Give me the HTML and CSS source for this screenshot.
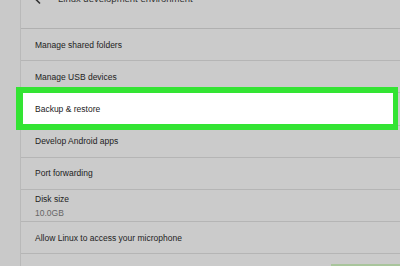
FILE: index.html
```html
<!DOCTYPE html>
<html>
<head>
<meta charset="utf-8">
<link rel="stylesheet" href="styles.css">
</head>
<body>
<div class="page">
  <div class="strip"></div>
  <div class="panel">
    <div class="header">
      <div class="header-inner">
        <svg class="back" width="12" height="12" viewBox="0 0 12 12"><path d="M11 6H2M6 1.5L1.5 6 6 10.5" fill="none" stroke="#333" stroke-width="1.6"/></svg>
        <span class="title">Linux development environment</span>
      </div>
    </div>
    <div class="row"><span class="label">Manage shared folders</span></div>
    <div class="row"><span class="label">Manage USB devices</span></div>
    <div class="row highlighted"><span class="label">Backup &amp; restore</span></div>
    <div class="row"><span class="label">Develop Android apps</span></div>
    <div class="row"><span class="label">Port forwarding</span></div>
    <div class="row two"><span class="label">Disk size</span><span class="sub">10.0GB</span></div>
    <div class="row"><span class="label">Allow Linux to access your microphone</span></div>
    <div class="row last"><span class="button"></span></div>
  </div>
</div>
</body>
</html>
```
FILE: styles.css
```css
html, body {
  margin: 0;
  padding: 0;
  background: #cbcbcb;
  overflow: hidden;
}
.page {
  display: flex;
  width: 400px;
  height: 266px;
  overflow: hidden;
  font-family: "Liberation Sans", Arial, sans-serif;
  color: #222;
}
.strip {
  width: 20px;
  flex: none;
  background: #c9c9c9;
  border-right: 1px solid #b9b9b9;
}
.panel {
  flex: 1;
  display: flex;
  flex-direction: column;
  min-height: 0;
}
.header {
  height: 28px;
  border-bottom: 1px solid #b0b0b0;
  flex: none;
}
.header-inner {
  display: flex;
  align-items: center;
  margin-top: -7px;
  padding-left: 13px;
  height: 12px;
}
.back {
  flex: none;
}
.title {
  margin-left: 12px;
  font-size: 9.5px;
  line-height: 12px;
  color: #333;
}
.row {
  height: 31.2px;
  flex: none;
  border-bottom: 1px solid #b5b5b5;
  display: flex;
  flex-direction: column;
  justify-content: center;
  padding-left: 14px;
}
.label {
  font-size: 8.5px;
  line-height: 14px;
  position: relative;
  z-index: 1;
}
.sub {
  font-size: 8.5px;
  line-height: 14px;
  color: #666;
}
.highlighted {
  position: relative;
}
.highlighted::before {
  content: "";
  position: absolute;
  left: -5px;
  right: 2px;
  top: -6px;
  bottom: -5px;
  background: #ffffff;
  border: 6px solid #33e433;
  border-left-width: 7px;
  border-right-width: 5px;
}
.last {
  flex: 1;
  height: auto;
  min-height: 0;
  overflow: hidden;
  border-bottom: none;
  justify-content: flex-start;
  align-items: flex-end;
  padding-top: 10px;
}
.button {
  display: block;
  width: 69px;
  height: 10px;
  background: #a9c59c;
}
```
